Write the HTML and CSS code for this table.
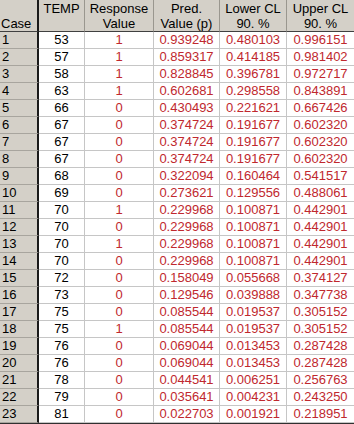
FILE: index.html
```html
<!DOCTYPE html>
<html>
<head>
<meta charset="utf-8">
<link rel="stylesheet" href="styles.css">
</head>
<body>
<div class="grid">
  <div class="hd case">Case</div>
  <div class="hd">TEMP</div>
  <div class="hd">Response<br>Value</div>
  <div class="hd">Pred.<br>Value (p)</div>
  <div class="hd">Lower CL<br>90. %</div>
  <div class="hd last">Upper CL<br>90. %</div>
</div>
<div class="grid body-grid" id="rows"></div>
<script src="script.js"></script>
</body>
</html>
```

FILE: script.js
```js
const data = [
[1,53,1,"0.939248","0.480103","0.996151"],
[2,57,1,"0.859317","0.414185","0.981402"],
[3,58,1,"0.828845","0.396781","0.972717"],
[4,63,1,"0.602681","0.298558","0.843891"],
[5,66,0,"0.430493","0.221621","0.667426"],
[6,67,0,"0.374724","0.191677","0.602320"],
[7,67,0,"0.374724","0.191677","0.602320"],
[8,67,0,"0.374724","0.191677","0.602320"],
[9,68,0,"0.322094","0.160464","0.541517"],
[10,69,0,"0.273621","0.129556","0.488061"],
[11,70,1,"0.229968","0.100871","0.442901"],
[12,70,0,"0.229968","0.100871","0.442901"],
[13,70,1,"0.229968","0.100871","0.442901"],
[14,70,0,"0.229968","0.100871","0.442901"],
[15,72,0,"0.158049","0.055668","0.374127"],
[16,73,0,"0.129546","0.039888","0.347738"],
[17,75,0,"0.085544","0.019537","0.305152"],
[18,75,1,"0.085544","0.019537","0.305152"],
[19,76,0,"0.069044","0.013453","0.287428"],
[20,76,0,"0.069044","0.013453","0.287428"],
[21,78,0,"0.044541","0.006251","0.256763"],
[22,79,0,"0.035641","0.004231","0.243250"],
[23,81,0,"0.022703","0.001921","0.218951"]
];
const rows = document.getElementById('rows');
const cls = ['c-case','c-temp','c-red','c-red','c-red','c-red last'];
for (const r of data) {
  r.forEach((v, i) => {
    const d = document.createElement('div');
    d.className = 'cell ' + cls[i];
    d.textContent = v;
    rows.appendChild(d);
  });
}
```

FILE: styles.css
```css
html, body {
  margin: 0;
  padding: 0;
}
body {
  background: #d4d0c8;
  font-family: "Liberation Sans", Arial, sans-serif;
  font-size: 13px;
  width: 354px;
  height: 424px;
  overflow: hidden;
}
.grid {
  display: grid;
  grid-template-columns: 39px 46px 69px 66px 67px 67px;
}
.hd {
  box-sizing: border-box;
  height: 32px;
  background: #d4d0c8;
  color: #000;
  text-align: center;
  line-height: 15px;
  padding-top: 1px;
  border-right: 1px solid #9a978f;
  border-bottom: 1px solid #404040;
}
.hd.case {
  text-align: left;
  padding-top: 16px;
  padding-left: 1px;
  border-right: 2px solid #1a1a1a;
}
.hd.last { border-right: none; }
.body-grid {
  grid-auto-rows: 17px;
  border-bottom: 1px solid #303030;
}
.cell {
  box-sizing: border-box;
  background: #fff;
  border-right: 1px solid #c6c6c6;
  border-bottom: 1px solid #c6c6c6;
  text-align: center;
  line-height: 16px;
  white-space: nowrap;
}
.cell.last { border-right: none; }
.c-case {
  background: #d4d0c8;
  text-align: left;
  padding-left: 2px;
  border-right: 2px solid #1a1a1a;
  border-bottom-color: #a8a59e;
  color: #000;
}
.c-temp { color: #000; }
.c-red { color: #c0282e; }
```
